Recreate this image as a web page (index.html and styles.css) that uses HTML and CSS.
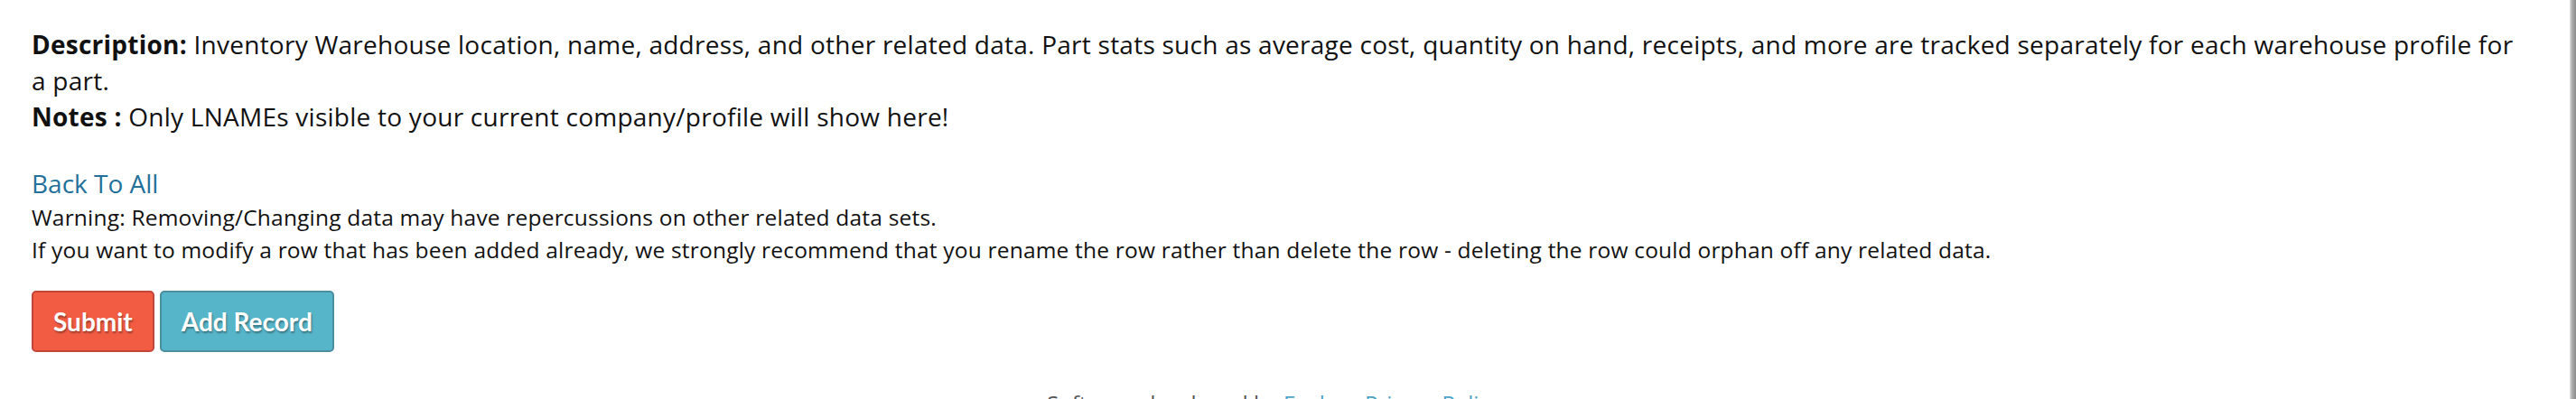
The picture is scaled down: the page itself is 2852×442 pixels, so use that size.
FILE: index.html
```html
<!DOCTYPE html>
<html lang="en">
<head>
  <meta charset="UTF-8">
  <title>Inventory Warehouse</title>
  <link rel="stylesheet" href="styles.css">
</head>
<body>

  <div class="frame">
    <div class="page">

      <p class="intro">
        <strong>Description:</strong> Inventory Warehouse location, name, address, and other related data. Part stats such as average cost, quantity on hand, receipts, and more are tracked separately for each warehouse profile for a part.<br>
        <strong>Notes :</strong> Only LNAMEs visible to your current company/profile will show here!
      </p>

      <a class="back-link" href="#">Back To All</a>

      <p class="warning">
        Warning: Removing/Changing data may have repercussions on other related data sets.<br>
        If you want to modify a row that has been added already, we strongly recommend that you rename the row rather than delete the row - deleting the row could orphan off any related data.
      </p>

      <div class="actions">
        <button class="btn btn-submit">Submit</button>
        <button class="btn btn-add">Add Record</button>
      </div>

      <div class="footer">
        Software developed by <a href="#">Evolve</a> &middot; <a href="#">Privacy Policy</a>
      </div>

    </div>
    <div class="edge"></div>
  </div>

</body>
</html>
```

FILE: styles.css
```css
body {
  margin: 0;
  font-family: "Open Sans", Lato, sans-serif;
  background-color: #fff;
  color: #111;
  overflow: hidden;
}

.frame {
  display: flex;
  height: 442px;
}

.page {
  flex: 1;
  padding: 29px 60px 0 35px;
}

.edge {
  width: 7px;
  background: linear-gradient(to right, #e4e4e4, #a9a9a9 40%, #8c8c8c);
}

.intro {
  margin: 0;
  font-size: 28px;
  line-height: 40px;
  letter-spacing: 0.25px;
}

.intro strong {
  font-weight: bold;
}

.back-link {
  display: block;
  margin-top: 34px;
  font-size: 28px;
  line-height: 40px;
  color: #23709a;
  text-decoration: none;
}

.warning {
  margin: 0;
  font-size: 24.5px;
  line-height: 36px;
  letter-spacing: 0.2px;
}

.actions {
  display: flex;
  gap: 6px;
  margin-top: 27px;
}

.btn {
  height: 68px;
  padding: 0 22px;
  border: 2px solid;
  border-radius: 5px;
  font-family: Lato, sans-serif;
  font-size: 28px;
  font-weight: bold;
  color: #fff;
  text-shadow: 1px 2px 2px rgba(0,0,0,0.35);
  cursor: pointer;
}

.btn-submit {
  background-color: #f25c43;
  border-color: #c2473a;
}

.btn-add {
  background-color: #57b5c9;
  border-color: #4a8ea0;
}

.footer {
  margin-top: 40px;
  text-align: center;
  font-size: 24px;
  color: #555;
}

.footer a {
  color: #4ea3c7;
  text-decoration: none;
}
```
